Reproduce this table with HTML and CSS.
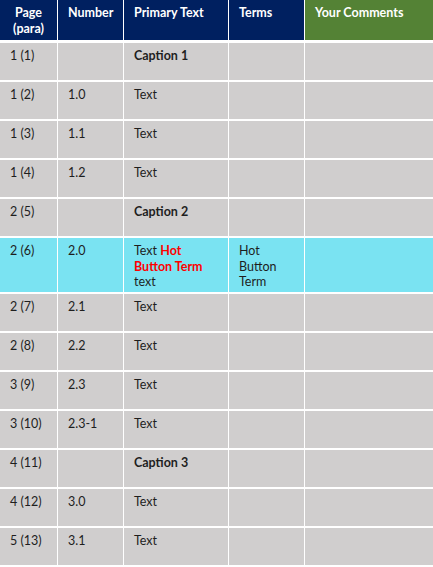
FILE: index.html
```html
<!DOCTYPE html>
<html>
<head>
<meta charset="utf-8">
<link rel="stylesheet" href="styles.css">
</head>
<body>
<div class="sheet">
  <div class="hd navy center">Page<br>(para)</div>
  <div class="hd navy">Number</div>
  <div class="hd navy">Primary Text</div>
  <div class="hd navy">Terms</div>
  <div class="hd green">Your Comments</div>

  <div class="c">1 (1)</div><div class="c"></div><div class="c b">Caption 1</div><div class="c"></div><div class="c"></div>
  <div class="c">1 (2)</div><div class="c">1.0</div><div class="c">Text</div><div class="c"></div><div class="c"></div>
  <div class="c">1 (3)</div><div class="c">1.1</div><div class="c">Text</div><div class="c"></div><div class="c"></div>
  <div class="c">1 (4)</div><div class="c">1.2</div><div class="c">Text</div><div class="c"></div><div class="c"></div>
  <div class="c">2 (5)</div><div class="c"></div><div class="c b">Caption 2</div><div class="c"></div><div class="c"></div>

  <div class="c hl">2 (6)</div><div class="c hl">2.0</div><div class="c hl">Text <span class="hot">Hot Button Term</span> text</div><div class="c hl">Hot<br>Button<br>Term</div><div class="c hl"></div>

  <div class="c">2 (7)</div><div class="c">2.1</div><div class="c">Text</div><div class="c"></div><div class="c"></div>
  <div class="c">2 (8)</div><div class="c">2.2</div><div class="c">Text</div><div class="c"></div><div class="c"></div>
  <div class="c">3 (9)</div><div class="c">2.3</div><div class="c">Text</div><div class="c"></div><div class="c"></div>
  <div class="c">3 (10)</div><div class="c">2.3-1</div><div class="c">Text</div><div class="c"></div><div class="c"></div>
  <div class="c">4 (11)</div><div class="c"></div><div class="c b">Caption 3</div><div class="c"></div><div class="c"></div>
  <div class="c">4 (12)</div><div class="c">3.0</div><div class="c">Text</div><div class="c"></div><div class="c"></div>
  <div class="c">5 (13)</div><div class="c">3.1</div><div class="c">Text</div><div class="c"></div><div class="c"></div>
</div>
</body>
</html>
```
FILE: styles.css
```css
html, body {
  margin: 0;
  padding: 0;
  background: #ffffff;
}
body {
  font-family: Lato, "Open Sans", sans-serif;
  font-size: 12.5px;
  line-height: 15.5px;
  color: #1e1e1e;
}
.sheet {
  display: grid;
  grid-template-columns: 57px 65px 104px 75px 128px;
  grid-template-rows: 41px repeat(5, 37px) 54px repeat(7, 37px);
  column-gap: 1px;
  row-gap: 2px;
  background: #ffffff;
}
.hd {
  height: 40px;
  align-self: start;
  color: #ffffff;
  font-weight: bold;
  line-height: 16px;
  padding: 5px 9px 0 10px;
  box-sizing: border-box;
}
.navy { background: #002060; }
.green { background: #548235; }
.center { text-align: center; padding-left: 0; padding-right: 0; }
.c {
  background: #d0cece;
  padding: 5px 8px 0 10px;
}
.b { font-weight: bold; }
.hl { background: #7ae3f2; }
.hot { color: #ff0000; font-weight: bold; }
```
